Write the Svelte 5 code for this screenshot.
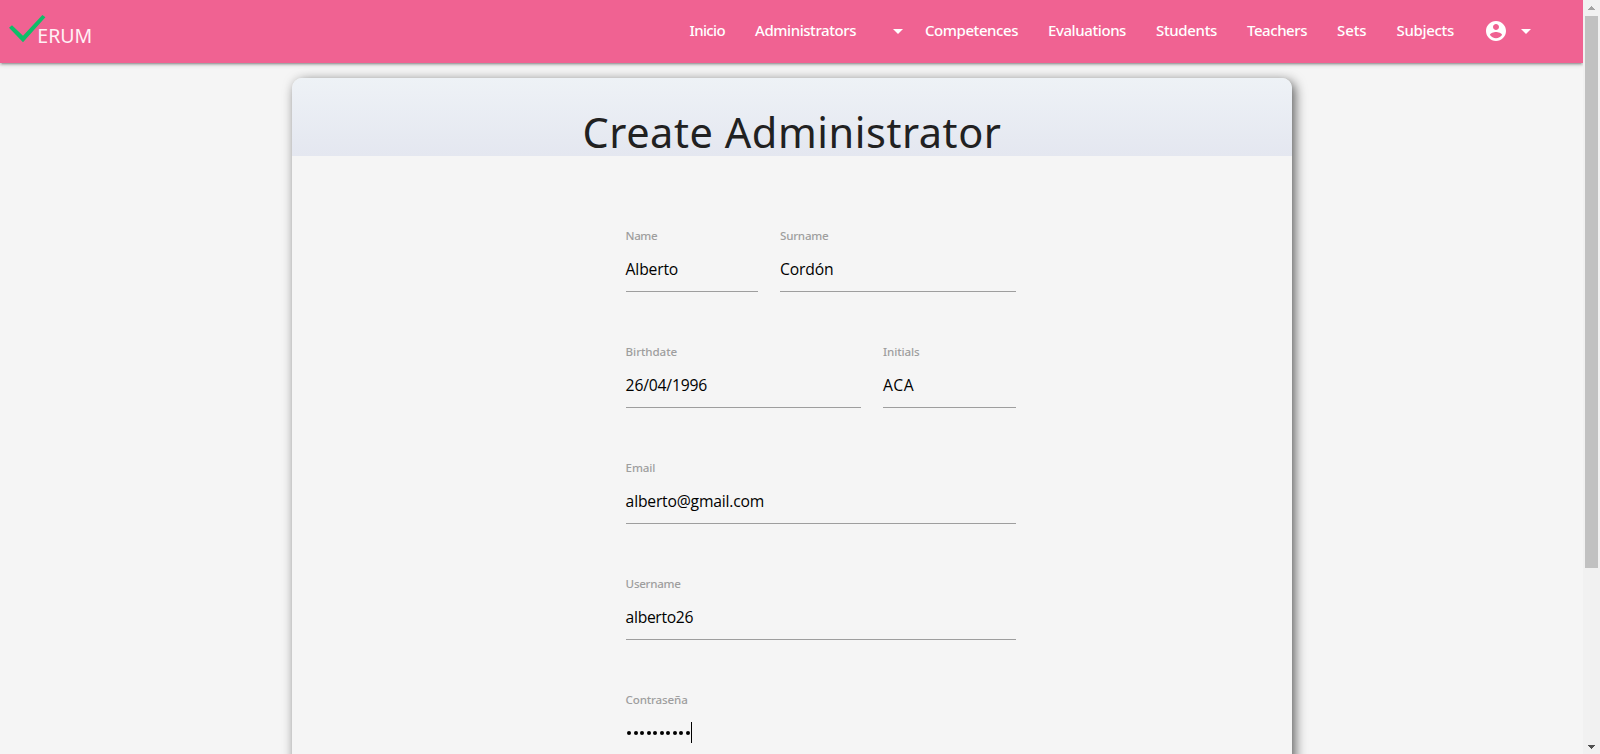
<script>
  const links = [
    { text: 'Competences', w: 93 },
    { text: 'Evaluations', w: 78 },
    { text: 'Students', w: 61 },
    { text: 'Teachers', w: 60 },
    { text: 'Sets', w: 29.5 },
    { text: 'Subjects', w: 57.5 }
  ];

  const rows = [
    {
      cols: '132px 236px',
      fields: [
        { label: 'Name', lw: 31.5, value: 'Alberto', vw: 52.5 },
        { label: 'Surname', lw: 48.5, value: 'Cordón', vw: 53.5 }
      ]
    },
    {
      cols: '235px 133px',
      fields: [
        { label: 'Birthdate', lw: 51.5, value: '26/04/1996', vw: 81.5 },
        { label: 'Initials', lw: 36.5, value: 'ACA', vw: 31 }
      ]
    },
    { cols: '390px', fields: [{ label: 'Email', lw: 29.5, value: 'alberto@gmail.com', vw: 138.5 }] },
    { cols: '390px', fields: [{ label: 'Username', lw: 55, value: 'alberto26', vw: 67.5 }] },
    { cols: '390px', fields: [{ label: 'Contraseña', lw: 62, secret: 10 }] }
  ];

  // Tracks the text so that it occupies the given width.
  function fit(node, width) {
    const natural = node.getBoundingClientRect().width;
    node.style.letterSpacing = (width - natural) / node.textContent.length + 'px';
  }
</script>

{#snippet arrow()}
  <svg class="icon" viewBox="0 0 24 24"><path d="M7 10l5 5 5-5z" /></svg>
{/snippet}

<div class="window">
  <div class="page">
    <nav>
      <a class="logo" href="#home" aria-label="Verum">
        <svg width="100" height="63" viewBox="0 0 100 63">
          <path d="M9 27.8L12 25.3L23 35.8L42.4 15L45.4 17.2L23 42.2z" fill="#0fbd68" />
          <text x="37.3" y="43" textLength="55" lengthAdjust="spacingAndGlyphs">ERUM</text>
        </svg>
      </a>
      <ul>
        <li><span use:fit={35.5}>Inicio</span></li>
        <li class="drop"><span use:fit={101}>Administrators</span>{@render arrow()}</li>
        {#each links as l}
          <li><span use:fit={l.w}>{l.text}</span></li>
        {/each}
        <li class="user">
          <svg class="icon" viewBox="0 0 24 24"><path d="M12 2C6.48 2 2 6.48 2 12s4.48 10 10 10 10-4.48 10-10S17.52 2 12 2zm0 3c1.66 0 3 1.34 3 3s-1.34 3-3 3-3-1.34-3-3 1.34-3 3-3zm0 14.2c-2.5 0-4.71-1.28-6-3.22.03-1.99 4-3.08 6-3.08 1.99 0 5.97 1.09 6 3.08-1.29 1.94-3.5 3.22-6 3.22z" /></svg>
          {@render arrow()}
        </li>
      </ul>
    </nav>

    <main>
      <header><h3><span use:fit={419}>Create Administrator</span></h3></header>
      <form>
        {#each rows as row}
          <div class="row" style="grid-template-columns: {row.cols}">
            {#each row.fields as f}
              <div class="field">
                <div class="label"><span use:fit={f.lw}>{f.label}</span></div>
                <div class="value">
                  {#if f.secret}
                    <div class="dots">{#each { length: f.secret } as _}<i></i>{/each}</div>
                    <b class="caret"></b>
                  {:else}
                    <span use:fit={f.vw}>{f.value}</span>
                  {/if}
                </div>
              </div>
            {/each}
          </div>
        {/each}
      </form>
    </main>
  </div>

  <div class="scrollbar">
    <svg width="17" height="16" viewBox="0 0 17 16" shape-rendering="crispEdges"><path d="M8 6h1v1h1v1h1v1h1v1H5V9h1V8h1V7h1z" fill="#a3a3a3" /></svg>
    <div class="thumb"></div>
    <svg class="down" width="17" height="17" viewBox="0 0 17 17" shape-rendering="crispEdges"><path d="M5 8h7v1h-1v1h-1v1H9v1H8v-1H7v-1H6V9H5z" fill="#505050" /></svg>
  </div>
</div>

<style>
  :global(body) { overflow: hidden; background: #f5f5f5; }
  .window { display: flex; width: 1600px; height: 754px; overflow: hidden; font-family: 'Noto Sans', 'Open Sans', sans-serif; }
  .page { width: 1583px; height: 754px; overflow: hidden; background: #f5f5f5; }
  nav {
    display: flex; justify-content: space-between; height: 63px; box-sizing: border-box;
    padding-right: 30px; background: #f06292; color: #fff;
    box-shadow: 0 2px 2px 0 rgba(0,0,0,.14), 0 3px 1px -2px rgba(0,0,0,.12), 0 1px 5px 0 rgba(0,0,0,.2);
  }
  .logo svg { display: block; }
  .logo text { font-size: 19.6px; fill: #fff0f5; }
  ul { display: flex; margin: 0; padding: 0; list-style: none; }
  li { display: flex; align-items: center; height: 61px; padding: 0 15px; font-size: 15px; font-weight: 500; white-space: nowrap; }
  li span { padding-bottom: 2px; }
  .drop { padding-right: 0; gap: 30px; }
  .user { gap: 6px; }
  .icon { display: block; width: 24px; height: 24px; fill: #fff; position: relative; top: .5px; }
  main {
    width: 1000px; height: 900px; margin: 15px 0 0 292px; border-radius: 10px; overflow: hidden;
    background: #f5f5f5; box-shadow: 3px 3px 12px #5c5c5c;
  }
  header { height: 78px; background: linear-gradient(#eef2f6, #e4e7f0); }
  h3 { margin: 0; padding-top: 30px; text-align: center; font-size: 41.5px; font-weight: 400; line-height: 48px; color: #212121; white-space: nowrap; }
  form { padding: 72px 0 0 334px; }
  .row { display: grid; column-gap: 22px; height: 116px; }
  .row:nth-child(n) .field:first-child span { margin-left: -.4px; }
  .label { height: 16px; font-size: 11.6px; line-height: 16px; font-weight: 500; color: #9e9e9e; white-space: nowrap; }
  .value { display: flex; align-items: center; box-sizing: border-box; height: 48px; padding-top: 2px; border-bottom: 1px solid #9e9e9e; font-family: 'Open Sans', 'Noto Sans', sans-serif; font-size: 15.7px; color: #000; white-space: nowrap; }
  .dots { display: flex; gap: 2.5px; padding: 1.5px 0 0 1px; }
  .dots i { width: 4px; height: 4px; border-radius: 50%; background: #000; }
  .caret { width: 1px; height: 21px; margin-left: 1px; background: #000; }
  .scrollbar { display: flex; flex-direction: column; width: 17px; height: 754px; background: #f1f1f1; }
  .thumb { width: 13px; height: 552px; margin-left: 2px; background: #c1c1c1; }
  .down { margin-top: auto; }
</style>
